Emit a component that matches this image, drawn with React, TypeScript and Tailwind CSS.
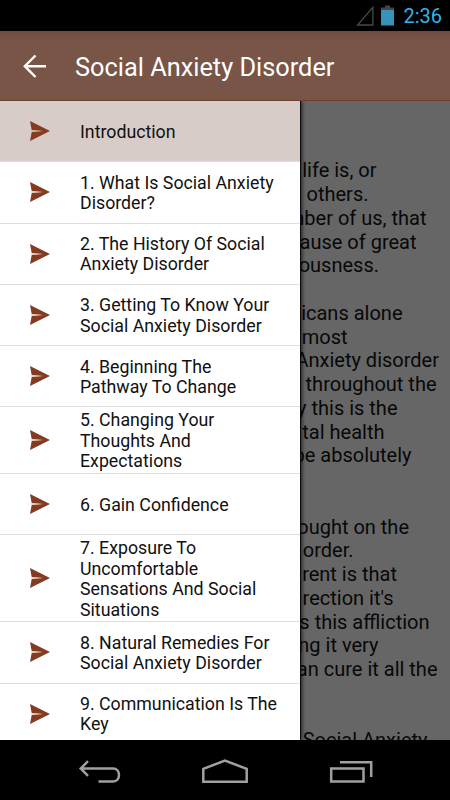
import React from 'react';

const chapters = [
  ['Introduction'],
  ['1. What Is Social Anxiety', 'Disorder?'],
  ['2. The History Of Social', 'Anxiety Disorder'],
  ['3. Getting To Know Your', 'Social Anxiety Disorder'],
  ['4. Beginning The', 'Pathway To Change'],
  ['5. Changing Your', 'Thoughts And', 'Expectations'],
  ['6. Gain Confidence'],
  ['7. Exposure To', 'Uncomfortable', 'Sensations And Social', 'Situations'],
  ['8. Natural Remedies For', 'Social Anxiety Disorder'],
  ['9. Communication Is The', 'Key'],
];

// end = right edge of the line, the drawer covers where it starts
const article = [
  { text: 'life is, or', end: 376.5 },
  { text: 'others.', end: 368.5 },
  { text: 'mber of us, that', end: 426.5 },
  { text: 'cause of great', end: 416.5 },
  { text: 'ousness.', end: 379 },
  { text: '', end: 0 },
  { text: 'icans alone', end: 402.5 },
  { text: 'most', end: 347.5 },
  { text: 'Anxiety disorder', end: 439 },
  { text: 'throughout the', end: 436.5 },
  { text: 'y this is the', end: 397.5 },
  { text: 'tal health', end: 384.5 },
  { text: 'be absolutely', end: 411.5 },
  { text: '', end: 0 },
  { text: '', end: 0 },
  { text: 'ought on the', end: 409 },
  { text: 'order.', end: 353.5 },
  { text: 'rent is that', end: 397 },
  { text: "rection it's", end: 393.5 },
  { text: 's this affliction', end: 429.5 },
  { text: 'ng it very', end: 378.5 },
  { text: 'an cure it all the', end: 437.5 },
  { text: '', end: 0 },
  { text: '', end: 0 },
  { text: 'Social Anxiety', end: 427.5 },
];

function StatusBar() {
  return (
    <div className="flex h-[31px] shrink-0 items-center justify-end bg-black pr-[8px]">
      <svg width="18" height="21" viewBox="0 0 18 21" fill="none" className="mr-[7px]">
        <path d="M16.9 2.2V20H1.5Z" stroke="#484848" strokeWidth="1.3" />
      </svg>
      <svg width="13" height="21" viewBox="0 0 13 21" className="mr-[9px]">
        <path d="M4 0.5h5v2h4v3H0v-3h4z" fill="#454545" />
        <path d="M0 5h13v15.5H0z" fill="#3793b9" />
      </svg>
      <span className="pt-[2px] text-[20px] leading-[29px] text-[#33b5e5]">2:36</span>
    </div>
  );
}

function AppBar() {
  return (
    <header className="flex h-[70px] shrink-0 items-center border-b border-[#70402f] bg-linear-to-b from-[#6d4b3f] via-[#795548] via-15% to-[#795548]">
      <svg width="26" height="26" viewBox="0 0 26 26" fill="none" className="ml-[22px] shrink-0">
        <path d="M13.5 2.5L2.8 13.2L13.5 24M2.8 13.2H24" stroke="#fff" strokeWidth="2.4" />
      </svg>
      <h1 className="ml-[27px] whitespace-nowrap pt-[4px] text-[25.35px] text-white">Social Anxiety Disorder</h1>
    </header>
  );
}

function SendIcon() {
  return (
    <svg width="20" height="20" viewBox="0 0 20 20" className="mb-[1.5px] ml-[30px] shrink-0">
      <path d="M0 0L20 10L0 20L1.7 11L13 10L1.7 9Z" fill="#843b20" />
      <path d="M1.5 9L13 10L1.5 11Z" fill="#cfae9f" fillOpacity="0.5" />
    </svg>
  );
}

function Drawer() {
  return (
    <nav className="absolute inset-y-0 left-0 w-[300px] overflow-hidden bg-white shadow-[1px_0_0_#0c0c0c,2px_0_4px_rgba(0,0,0,0.7)]">
      {chapters.map((lines, i) => (
        <div
          key={lines[0]}
          className={`flex min-h-[61.3px] items-center border-b border-[#dedede] pt-[2.75px] pb-[1.25px] ${i === 0 ? 'bg-[#d7ccc8]' : ''}`}
        >
          <SendIcon />
          <div className="ml-[30px] whitespace-nowrap text-[17.75px] leading-[20.5px] text-[#111]">
            {lines.map((line) => (
              <div key={line}>{line}</div>
            ))}
          </div>
        </div>
      ))}
    </nav>
  );
}

function NavBar() {
  return (
    <footer className="flex h-[60px] shrink-0 items-center justify-center gap-[80px] bg-black pt-[3px]">
      <svg width="44" height="24" viewBox="0 0 44 24" fill="none" stroke="#a0a0a0" strokeWidth="2.5">
        <path d="M11 1.2L3.7 8.5L11 15.8M3.7 8.5H36C44 8.5 44 21.5 36 21.5H21.5" />
      </svg>
      <svg width="48" height="26" viewBox="0 0 48 26" fill="none" stroke="#a0a0a0" strokeWidth="2.5">
        <path d="M2.3 22.8V9.8L24 1.6L45.7 9.8V22.8Z" />
      </svg>
      <svg width="44" height="24" viewBox="0 0 44 24" fill="none" stroke="#a0a0a0" strokeWidth="2.5">
        <path d="M2.2 8.5H34.5V21.5H2.2ZM11 2.3H42.2V17" />
      </svg>
    </footer>
  );
}

export default function App() {
  return (
    <div className="flex h-[800px] w-[450px] flex-col overflow-hidden bg-black font-['Roboto',sans-serif]">
      <StatusBar />
      <AppBar />
      <main className="relative min-h-0 flex-1 overflow-hidden bg-[#666]">
        <div className="pt-[58.25px] text-[20px] leading-[23.75px] text-[#080808]">
          {article.map((line, i) => (
            <div key={i} className="h-[23.75px] whitespace-nowrap text-right" style={{ width: line.end }}>
              {line.text}
            </div>
          ))}
        </div>
        <Drawer />
      </main>
      <NavBar />
    </div>
  );
}
